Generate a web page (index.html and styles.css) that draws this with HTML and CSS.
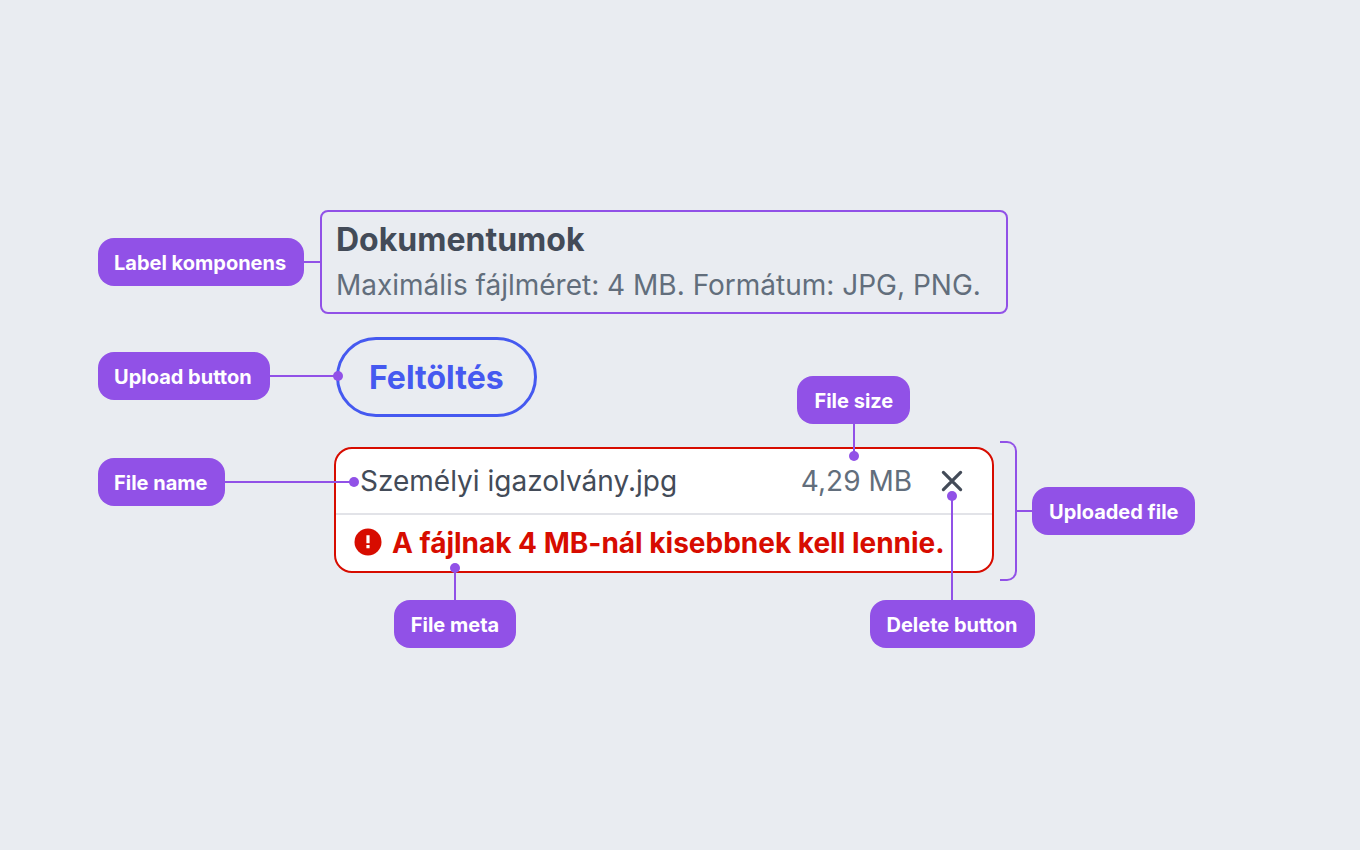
FILE: index.html
```
<!DOCTYPE html>
<html lang="hu">
  <head>
    <meta charset="UTF-8" />
    <meta name="viewport" content="width=device-width, initial-scale=1.0" />
    <title>File upload | Anatomy</title>
    <link rel="stylesheet" href="styles.css">
  </head>

  <body>
    <main class="anatomy">
      <div class="row">
        <div class="pin pin-label">
          <span class="tag">Label komponens</span>
          <span class="line"></span>
        </div>
        <div class="label-box">
          <h2>Dokumentumok</h2>
          <p>Maximális fájlméret: 4 MB. Formátum: JPG, PNG.</p>
        </div>
      </div>

      <div class="row row-upload">
        <div class="pin pin-upload">
          <span class="tag">Upload button</span>
          <span class="line dot"></span>
        </div>
        <div class="upload">
          <button type="button" class="btn-upload">Feltöltés</button>
        </div>
      </div>

      <div class="row row-file">
        <div class="pin pin-name">
          <span class="tag">File name</span>
          <span class="line dot"></span>
        </div>

        <div class="file-card">
          <div class="file-info">
            <span class="file-name">Személyi igazolvány.jpg</span>
            <div class="file-size">
              4,29 MB
              <div class="pin pin-above">
                <span class="tag">File size</span>
                <span class="line dot"></span>
              </div>
            </div>
            <div class="delete">
              <button type="button" class="btn-delete" aria-label="Delete">
                <svg width="24" height="24" viewBox="0 0 24 24" fill="none" stroke="currentColor" stroke-width="3.2" stroke-linecap="round">
                  <path d="M3.4 3.4l17.2 17.2M20.6 3.4L3.4 20.6" />
                </svg>
              </button>
              <div class="pin pin-below pin-delete">
                <span class="line dot"></span>
                <span class="tag">Delete button</span>
              </div>
            </div>
          </div>

          <div class="file-meta">
            <svg width="28" height="30" viewBox="0 0 28 30">
              <circle cx="14" cy="14" r="13.5" fill="currentColor" />
              <path d="M12.4 7.2h3.2v8h-3.2zM12.4 17h3.2v3.3h-3.2z" fill="#fff" />
            </svg>
            <span>A fájlnak 4 MB-nál kisebbnek kell lennie.</span>
            <div class="pin pin-below pin-meta">
              <span class="line dot"></span>
              <span class="tag">File meta</span>
            </div>
          </div>
        </div>

        <div class="pin pin-right">
          <span class="bracket"></span>
          <span class="line"></span>
          <span class="tag">Uploaded file</span>
        </div>
      </div>
    </main>
  </body>
</html>
```
FILE: styles.css
```
:root {
  --background: #e9ecf1;
  --purple: #9151e7;
  --blue: #4559f0;
  --red: #d70c00;
  --text: #434b58;
  --text-light: #626e7c;
  --divider: #e2e3e8;
}

* {
  box-sizing: border-box;
  margin: 0;
  padding: 0;
}

body {
  background-color: var(--background);
  color: var(--text);
  font-family: Inter, sans-serif;
  font-size: 28px;
  line-height: 40px;
}

.anatomy {
  padding: 210px 164px 202px 98px;
}

.row {
  display: grid;
  grid-template-columns: 222px minmax(0, 1fr) 188px;
  align-items: start;
}

.row-upload {
  margin-top: 23px;
}

.row-file {
  margin-top: 30px;
}

/* Callouts */
.pin {
  display: flex;
  align-items: center;
  z-index: 1;
}

.tag {
  flex: none;
  height: 48px;
  padding: 0 18px 0 16px;
  border-radius: 16px;
  background: var(--purple);
  color: white;
  font-size: 20px;
  font-weight: 700;
  line-height: 50px;
  white-space: nowrap;
}

.line {
  position: relative;
  flex: 1;
  height: 2px;
  background: var(--purple);
}

.dot::after {
  content: "";
  position: absolute;
  top: -4px;
  right: -5px;
  width: 10px;
  height: 10px;
  border-radius: 50%;
  background: var(--purple);
}

.pin-label {
  margin-top: 28px;
}

.pin-upload {
  margin: 15px -18px 0 0;
}

.pin-name {
  margin: 11px -34px 0 0;
}

/* Vertical callouts have no width, so their content is centered on "left" */
.pin-above,
.pin-below {
  position: absolute;
  flex-direction: column;
  width: 0;
}

.pin-above .tag,
.pin-below .tag {
  padding: 0 17px;
}

.pin-above .line,
.pin-below .line {
  flex: none;
  width: 2px;
  height: 32px;
}

.pin-above {
  bottom: 45px;
  left: 53px;
}

.pin-above .dot::after {
  top: auto;
  right: -4px;
  bottom: -5px;
}

.pin-below .dot::after {
  top: -5px;
  right: -4px;
}

.pin-delete {
  top: 35px;
  left: 50%;
}

.pin-delete .line {
  height: 104px;
}

.pin-meta {
  top: 53px;
  left: 119px;
}

.pin-right {
  align-self: stretch;
  margin: -6px 0 -8px -8px;
}

.pin-right .line {
  flex: 0 0 15px;
}

.pin-right .tag {
  padding: 0 17px;
}

.bracket {
  align-self: stretch;
  width: 17px;
  border: 2px solid var(--purple);
  border-left: none;
  border-radius: 0 10px 10px 0;
}

/* Label */
.label-box {
  padding: 8px 14px;
  border: 2px solid var(--purple);
  border-radius: 8px;
}

.label-box h2 {
  font-size: 32px;
  font-weight: 700;
  line-height: 40px;
}

.label-box p {
  padding-top: 4px;
  color: var(--text-light);
  line-height: 42px;
  margin-bottom: -2px;
}

/* Upload button */
.upload {
  padding-left: 16px;
}

.btn-upload {
  display: block;
  height: 80px;
  padding: 2px 30px 0;
  border: 3px solid var(--blue);
  border-radius: 40px;
  background: transparent;
  color: var(--blue);
  font: 700 32px/40px Inter, sans-serif;
  cursor: pointer;
}

/* Uploaded file */
.file-card {
  margin: 0 14px;
  border: 2px solid var(--red);
  border-radius: 18px;
  background: white;
}

.file-info {
  display: flex;
  align-items: center;
  height: 66px;
  padding: 0 20px 0 24px;
  border-bottom: 2px solid var(--divider);
}

.file-name {
  flex: 1;
}

.file-size {
  position: relative;
  margin-right: 20px;
  color: var(--text-light);
}

.delete {
  position: relative;
}

.btn-delete {
  display: flex;
  align-items: center;
  justify-content: center;
  width: 40px;
  height: 40px;
  border: none;
  background: none;
  color: var(--text);
  cursor: pointer;
}

.file-meta {
  position: relative;
  display: flex;
  align-items: center;
  gap: 10px;
  height: 56px;
  padding: 0 18px;
  color: var(--red);
  font-weight: 700;
}
```
